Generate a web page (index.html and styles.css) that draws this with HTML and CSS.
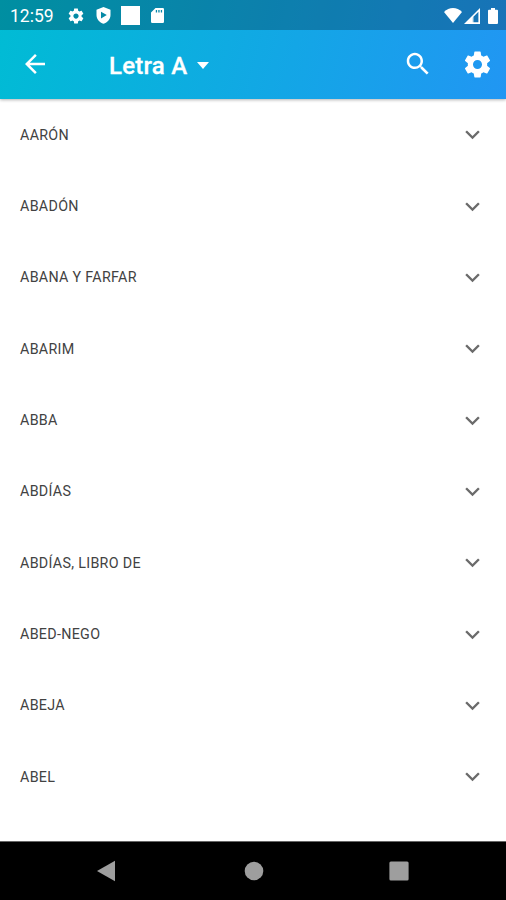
FILE: index.html
```
<!DOCTYPE html>
<html lang="es">
<head>
<meta charset="utf-8">
<title>Letra A</title>
<link rel="stylesheet" href="styles.css">
</head>
<body>
<svg class="defs" width="0" height="0">
  <symbol id="gear" viewBox="0 0 24 24"><path d="M19.43 12.98c.04-.32.07-.64.07-.98s-.03-.66-.07-.98l2.11-1.65c.19-.15.24-.42.12-.64l-2-3.46c-.12-.22-.39-.3-.61-.22l-2.49 1c-.52-.4-1.08-.73-1.69-.98l-.38-2.65C14.46 2.18 14.25 2 14 2h-4c-.25 0-.46.18-.49.42l-.38 2.65c-.61.25-1.17.59-1.69.98l-2.49-1c-.23-.09-.49 0-.61.22l-2 3.46c-.13.22-.07.49.12.64l2.11 1.65c-.04.32-.07.65-.07.98s.03.66.07.98l-2.11 1.65c-.19.15-.24.42-.12.64l2 3.46c.12.22.39.3.61.22l2.49-1c.52.4 1.08.73 1.69.98l.38 2.65c.03.24.24.42.49.42h4c.25 0 .46-.18.49-.42l.38-2.65c.61-.25 1.17-.59 1.69-.98l2.49 1c.23.09.49 0 .61-.22l2-3.46c.12-.22.07-.49-.12-.64l-2.11-1.65zM12 15.5c-1.93 0-3.5-1.57-3.5-3.5s1.57-3.5 3.5-3.5 3.5 1.57 3.5 3.5-1.57 3.5-3.5 3.5z"/></symbol>
  <symbol id="chevron" viewBox="0 0 24 24"><path d="M16.59 8.59L12 13.17 7.41 8.59 6 10l6 6 6-6z"/></symbol>
</svg>
<div class="screen">
  <header class="top">
    <div class="status">
      <span class="clock">12:59</span>
      <svg class="s-gear"><use href="#gear"/></svg>
      <svg class="s-shield" viewBox="0 0 15 17"><path fill-rule="evenodd" d="M7.500 0L14.500 2.700V8C14.500 12 11.500 15.500 7.500 16.700C3.500 15.500 .5 12 .5 8V2.700zM5 4.800V11.400L10.800 8.100z"/></svg>
      <span class="s-square"></span>
      <svg class="s-card" viewBox="0 0 13 15"><path fill-rule="evenodd" d="M4.500 0H11.800Q13 0 13 1.200V13.800Q13 15 11.800 15H1.200Q0 15 0 13.800V4.500zM4.800 2V4.600H6.100V2zM7.300 2V4.600H8.600V2zM9.800 2V4.600H11.100V2z"/></svg>
      <span class="grow"></span>
      <svg class="s-wifi" viewBox="0 0 18 15"><path d="M9 15L0 4C5-1.200 13-1.200 18 4z"/></svg>
      <svg class="s-signal" viewBox="0 0 16 16"><path fill-rule="evenodd" d="M0 16L16 0V16zM8.200 10V14.300H14.400V3.800z"/><path d="M8.200 9H9.400V15H8.200z"/></svg>
      <svg class="s-battery" viewBox="0 0 10 16"><path d="M3 0H7V1.700H9Q10 1.700 10 2.700V15Q10 16 9 16H1Q0 16 0 15V2.700Q0 1.700 1 1.700H3z"/></svg>
    </div>
    <div class="bar">
      <svg class="back" viewBox="0 0 24 24"><path d="M20 11H7.830l5.590-5.590L12 4l-8 8 8 8 1.410-1.410L7.830 13H20v-2z"/></svg>
      <span class="title">Letra A</span>
      <span class="caret"></span>
      <span class="grow"></span>
      <svg class="search" viewBox="0 0 24 24"><path d="M15.500 14h-.79l-.28-.27C15.410 12.590 16 11.110 16 9.500 16 5.910 13.090 3 9.500 3S3 5.910 3 9.500 5.910 16 9.500 16c1.610 0 3.090-.59 4.230-1.570l.27.28v.79l5 4.990L20.490 19l-4.990-5zm-6 0C7.010 14 5 11.990 5 9.500S7.010 5 9.500 5 14 7.010 14 9.500 11.990 14 9.500 14z"/></svg>
      <svg class="settings"><use href="#gear"/></svg>
    </div>
  </header>
  <main class="list">
    <div class="row"><span>AARÓN</span><svg><use href="#chevron"/></svg></div>
    <div class="row"><span>ABADÓN</span><svg><use href="#chevron"/></svg></div>
    <div class="row"><span>ABANA Y FARFAR</span><svg><use href="#chevron"/></svg></div>
    <div class="row"><span>ABARIM</span><svg><use href="#chevron"/></svg></div>
    <div class="row"><span>ABBA</span><svg><use href="#chevron"/></svg></div>
    <div class="row"><span>ABDÍAS</span><svg><use href="#chevron"/></svg></div>
    <div class="row"><span>ABDÍAS, LIBRO DE</span><svg><use href="#chevron"/></svg></div>
    <div class="row"><span>ABED-NEGO</span><svg><use href="#chevron"/></svg></div>
    <div class="row"><span>ABEJA</span><svg><use href="#chevron"/></svg></div>
    <div class="row"><span>ABEL</span><svg><use href="#chevron"/></svg></div>
  </main>
  <nav class="nav">
    <svg viewBox="0 0 22 22"><path d="M2 11L20 .8V21.200z"/></svg>
    <svg viewBox="0 0 22 22"><circle cx="11" cy="11" r="9.300"/></svg>
    <svg viewBox="0 0 22 22"><rect x="1.400" y="1.400" width="19.200" height="19.200" rx="1.500"/></svg>
  </nav>
</div>
</body>
</html>
```
FILE: styles.css
```
* { box-sizing: border-box; }
body { margin: 0; font-family: Roboto, "Liberation Sans", sans-serif; background: #fff; }
svg { display: block; flex: none; fill: #fff; }
.defs { position: absolute; }
.screen { width: 506px; height: 900px; display: flex; flex-direction: column; overflow: hidden; }
.grow { flex: 1; }

.top {
  flex: none;
  height: 99px;
  background: linear-gradient(105deg, #00bcd4, #2196f3);
  box-shadow: 0 1px 3px rgba(0, 0, 0, .3);
}
.status { height: 30px; display: flex; align-items: center; padding: 1px 8px 0 10px; background: rgba(0, 0, 0, .24); }
.clock { width: 57px; color: #fff; font-size: 17.500px; line-height: 30px; }
.s-gear { width: 18px; height: 18px; }
.s-shield { width: 15px; height: 17px; margin-left: 11px; }
.s-square { width: 19px; height: 19px; margin-left: 10px; background: #fff; }
.s-card { width: 13px; height: 15px; margin-left: 11px; }
.s-wifi { width: 18px; height: 15px; }
.s-signal { width: 16px; height: 16px; margin-left: 2px; }
.s-battery { width: 10px; height: 16px; margin: 0 0 0 8px; }

.bar { height: 69px; display: flex; align-items: center; padding: 0 13px 1px 20px; }
.back { width: 30px; height: 30px; }
.title { margin: 3px 0 0 59px; width: 79px; color: #fff; font-size: 24px; font-weight: 500; letter-spacing: .25px; line-height: 30px; white-space: nowrap; -webkit-text-stroke: .3px #fff; }
.caret { margin: 3px 0 0 9px; border: 6.500px solid transparent; border-top: 7px solid #fff; border-bottom: 0; }
.search { width: 30px; height: 30px; }
.settings { width: 31px; height: 31px; margin-left: 29px; }

.list { flex: 1; min-height: 0; }
.row { height: 71.350px; display: flex; align-items: center; justify-content: space-between; padding: 0 19.500px 0 20px; color: #424242; font-size: 14.300px; letter-spacing: .3px; }
.row svg { width: 29px; height: 29px; fill: #6b6b6b; }

.nav { flex: none; height: 59px; display: flex; align-items: center; justify-content: space-between; padding: 0 96px 0 95px; background: #000; border-top: 1px solid #666; }
.nav svg { width: 22px; height: 22px; fill: #9e9e9e; }
.nav svg:nth-child(2) { margin-left: 3px; }
```
